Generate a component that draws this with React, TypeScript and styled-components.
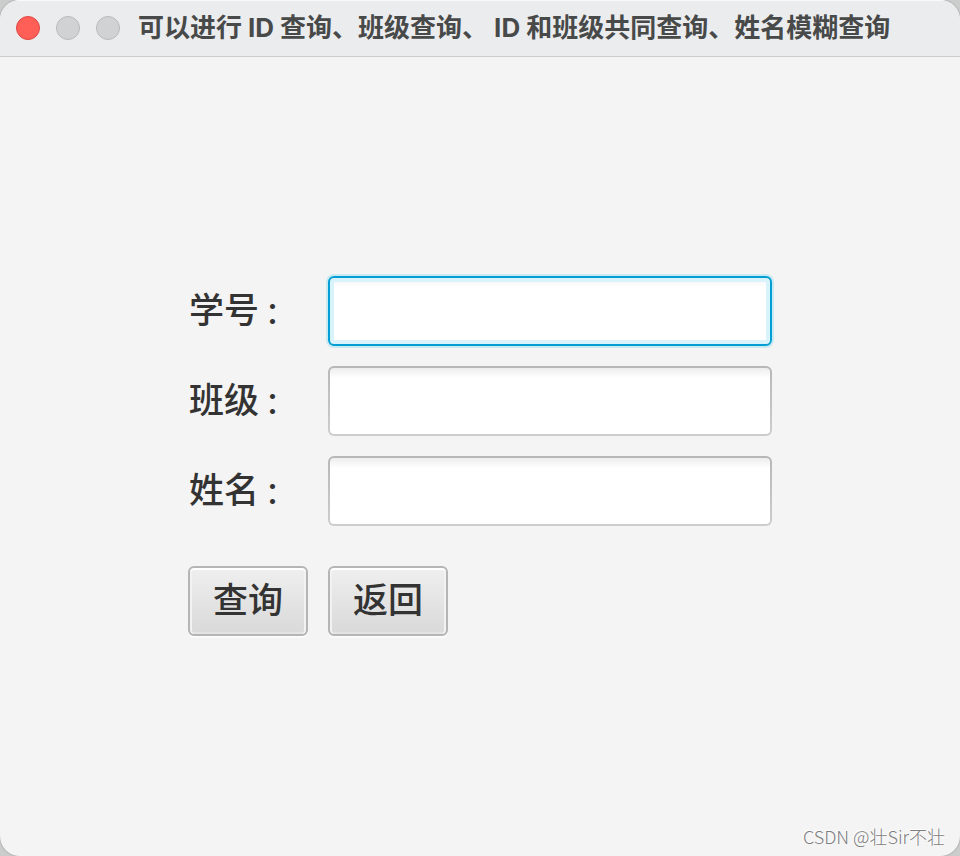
import React from "react";
import styled, { createGlobalStyle, css } from "styled-components";

const GlobalStyle = createGlobalStyle`
  *, *::before, *::after { box-sizing: border-box; }
  body {
    margin: 0;
    background: #cbcdcc;
    font-family: Inter, "Noto Sans CJK SC", sans-serif;
    color: #333333;
  }
`;

const Window = styled.div`
  position: relative;
  display: flex;
  flex-direction: column;
  min-height: 100vh;
  overflow: hidden;
  border-radius: 20px;
  background: #f4f4f4;
  box-shadow: 0 0 2px #8c8c8c;
`;

const TitleBar = styled.header`
  display: flex;
  align-items: center;
  gap: 18px;
  height: 57px;
  padding: 0 16px 1px;
  background: #ebecee;
  border-bottom: 1px solid #cdcdcf;
  box-shadow: inset 0 1px 0 #f8f9fa;
`;

const Lights = styled.div`
  display: flex;
  gap: 16px;
`;

const Light = styled.button<{ $fill: string; $edge: string }>`
  width: 24px;
  height: 24px;
  padding: 0;
  border: 1px solid ${(p) => p.$edge};
  border-radius: 50%;
  background: ${(p) => p.$fill};
`;

const Title = styled.h1`
  display: flex;
  align-items: center;
  gap: 6px;
  margin: 0;
  font-size: 26px;
  line-height: 40px;
  font-weight: 700;
  white-space: nowrap;
  color: #484949;
`;

const Content = styled.main`
  flex: 1;
  display: flex;
  align-items: center;
  justify-content: center;
  padding: 20px 20px 21px;
`;

const Form = styled.form`
  display: grid;
  grid-template-columns: 120px minmax(120px, 444px);
  gap: 20px;
`;

const Label = styled.label`
  align-self: center;
  padding: 0 0 4px 1px;
  font-family: "Noto Sans CJK SC", sans-serif;
  font-size: 35px;
  line-height: 52px;
  font-weight: 500;
  white-space: nowrap;
`;

const Colon = styled.span`
  margin-left: 6px;
  font-size: 30px;
`;

const Field = styled.input<{ $active?: boolean }>`
  width: 100%;
  height: 70px;
  padding: 0 14px;
  border: 2px solid transparent;
  border-radius: 6px;
  outline: none;
  font: inherit;
  font-size: 32px;
  color: inherit;
  background:
    linear-gradient(#ededed, #ffffff 10px) padding-box,
    linear-gradient(#b7b7b7, #cdcdcd) border-box;
  ${(p) =>
    p.$active &&
    css`
      border-color: #039ed3;
      background: linear-gradient(#f4f4f4, #ffffff 10px) padding-box;
      box-shadow: 0 0 0 2px #c9e9f3, inset 0 0 0 4px #d9f3fb;
    `}
`;

const Actions = styled.div`
  grid-column: 1 / -1;
  display: flex;
  gap: 20px;
  padding-top: 20px;
`;

const Button = styled.button`
  width: 120px;
  height: 70px;
  padding: 0 0 6px;
  border: 2px solid #b5b5b5;
  border-radius: 6px;
  background: linear-gradient(#efefef, #d9d9d9);
  box-shadow: 0 2px 0 #fbfbfb, inset 0 2px 0 #ffffff, inset 2px 0 0 #f2f2f2,
    inset -2px 0 0 #f2f2f2, inset 0 -2px 0 #e3e3e3;
  font-family: "Noto Sans CJK SC", sans-serif;
  font-size: 35px;
  line-height: 52px;
  font-weight: 500;
  color: #333333;
`;

const Watermark = styled.span`
  position: absolute;
  right: 15px;
  bottom: 8px;
  font-family: "Noto Sans CJK SC", sans-serif;
  font-size: 18px;
  line-height: 24px;
  font-weight: 300;
  color: #7d7d7d;
  text-shadow: -1px -1px 0 #ffffff;
`;

const fields = [
  { id: "student-id", label: "学号", active: true },
  { id: "class-name", label: "班级", active: false },
  { id: "full-name", label: "姓名", active: false },
];

export default function App() {
  return (
    <>
      <GlobalStyle />
      <Window>
        <TitleBar>
          <Lights>
            <Light type="button" aria-label="关闭" $fill="#ff5f57" $edge="#e2463f" />
            <Light type="button" aria-label="最小化" $fill="#d1d2d3" $edge="#b8b9ba" />
            <Light type="button" aria-label="缩放" $fill="#d1d2d3" $edge="#b8b9ba" />
          </Lights>
          <Title>
            <span>可以进行</span>
            <span>ID</span>
            <span>查询、班级查询、</span>
            <span>ID</span>
            <span>和班级共同查询、姓名模糊查询</span>
          </Title>
        </TitleBar>
        <Content>
          <Form onSubmit={(e) => e.preventDefault()}>
            {fields.map((f) => (
              <React.Fragment key={f.id}>
                <Label htmlFor={f.id}>
                  {f.label}
                  <Colon>：</Colon>
                </Label>
                <Field id={f.id} type="text" autoComplete="off" $active={f.active} />
              </React.Fragment>
            ))}
            <Actions>
              <Button type="submit">查询</Button>
              <Button type="button">返回</Button>
            </Actions>
          </Form>
        </Content>
        <Watermark>CSDN @壮Sir不壮</Watermark>
      </Window>
    </>
  );
}
